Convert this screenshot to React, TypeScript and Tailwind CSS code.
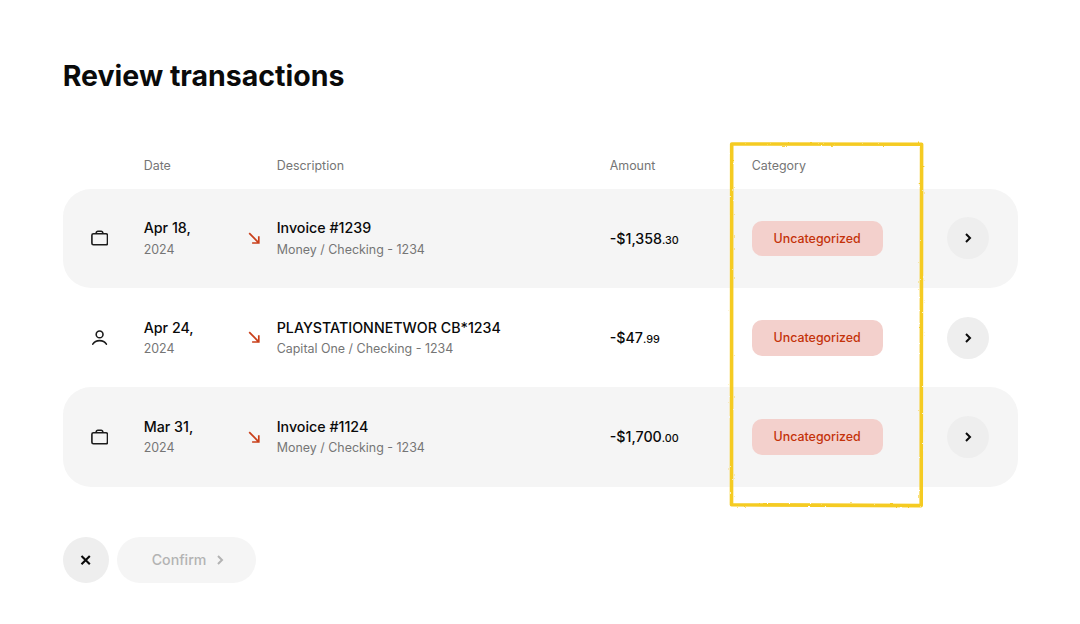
const COLS = "grid grid-cols-[81px_104px_29px_333px_142px_195px_1fr] items-center";

const transactions = [
  {
    kind: "business",
    day: "Apr 18,",
    year: "2024",
    title: "Invoice #1239",
    account: "Money / Checking - 1234",
    amount: "-$1,358",
    cents: ".30",
  },
  {
    kind: "personal",
    day: "Apr 24,",
    year: "2024",
    title: "PLAYSTATIONNETWOR CB*1234",
    account: "Capital One / Checking - 1234",
    amount: "-$47",
    cents: ".99",
  },
  {
    kind: "business",
    day: "Mar 31,",
    year: "2024",
    title: "Invoice #1124",
    account: "Money / Checking - 1234",
    amount: "-$1,700",
    cents: ".00",
  },
];

function BriefcaseIcon() {
  return (
    <svg width="18" height="18" viewBox="0 0 18 18" fill="none" stroke="#1c1c1c" strokeWidth="1.6" strokeLinejoin="round">
      <rect x="1.9" y="4.8" width="15.6" height="11" rx="1.5" />
      <path d="M6.200 4.800V4a1.700 1.700 0 0 1 1.700-1.700h3.200a1.700 1.700 0 0 1 1.700 1.700v.8" />
    </svg>
  );
}

function PersonIcon() {
  return (
    <svg width="18" height="18" viewBox="0 0 18 18" fill="none" stroke="#1c1c1c" strokeWidth="1.6" strokeLinecap="round">
      <circle cx="9.6" cy="5.4" r="3.4" />
      <path d="M2.800 15.200C4.200 12.900 6.700 11.600 9.600 11.600s5.400 1.300 6.800 3.600" />
    </svg>
  );
}

function ArrowDownRight() {
  return (
    <svg width="13" height="13" viewBox="0 0 13 13" fill="none" stroke="#c93f1a" strokeWidth="1.7">
      <path d="M1.200 1.100 10.700 10.800M10.800 4.300v6.700H4.100" />
    </svg>
  );
}

function Chevron() {
  return (
    <svg width="8" height="12" viewBox="0 0 8 12" fill="none" stroke="currentColor" strokeWidth="2">
      <path d="M2 2 6 6 2 10" />
    </svg>
  );
}

// Hand-drawn marker box around the category column
function MarkerBox() {
  return (
    <svg
      className="pointer-events-none absolute left-[664px] -top-[3px]"
      width="200"
      height="372"
      viewBox="0 0 200 372"
      fill="none"
    >
      <filter id="rough" x="-5%" y="-5%" width="110%" height="110%">
        <feTurbulence type="fractalNoise" baseFrequency="0.3" numOctaves="2" seed="4" />
        <feDisplacementMap in="SourceGraphic" scale="2" xChannelSelector="R" yChannelSelector="G" />
      </filter>
      <path
        d="M4.700 5 194.600 5.200 194.200 366.600 4.500 365.800Z"
        stroke="#f5cb23"
        strokeWidth="3.600"
        strokeLinejoin="round"
        filter="url(#rough)"
      />
    </svg>
  );
}

export default function App() {
  return (
    <main className="h-[624px] w-[1080px] bg-white pl-[62.7px] pt-[58px] font-['Inter',sans-serif] text-[#0a0a0a]">
      <h1 className="h-[36px] text-[28.5px] font-bold leading-[36px]">Review transactions</h1>

      <section className="relative mt-[48px] w-[955px]">
        <div className={`${COLS} h-[46.7px] pt-[1.5px] text-[12.45px] text-[#757575]`}>
          <span className="col-start-2">Date</span>
          <span className="col-start-4">Description</span>
          <span>Amount</span>
          <span>Category</span>
        </div>

        {transactions.map((t, i) => (
          <div
            key={t.title}
            className={`${COLS} h-[99.4px] rounded-[28px] ${i % 2 === 0 ? "bg-[#f5f5f5]" : ""}`}
          >
            <div className="pl-[27px]">{t.kind === "business" ? <BriefcaseIcon /> : <PersonIcon />}</div>
            <div className="leading-[21px]">
              <div className="text-[14.25px] font-medium">{t.day}</div>
              <div className="pt-[0.5px] text-[12.45px] text-[#757575]">{t.year}</div>
            </div>
            <ArrowDownRight />
            <div className="leading-[21px]">
              <div className="text-[14.25px] font-medium">{t.title}</div>
              <div className="pt-[0.5px] text-[12.45px] text-[#757575]">{t.account}</div>
            </div>
            <div className="text-[14.25px] font-medium">
              {t.amount}
              <span className="text-[10.8px]">{t.cents}</span>
            </div>
            <div>
              <span className="flex h-[35.5px] w-[131px] items-center justify-center rounded-[10px] bg-[#f3d0cc] pt-[1.2px] text-[12.4px] font-medium text-[#c4320a]">
                Uncategorized
              </span>
            </div>
            <button className="flex size-[42px] items-center justify-center rounded-full bg-[#eeeeee]">
              <Chevron />
            </button>
          </div>
        ))}

        <MarkerBox />
      </section>

      <div className="mt-[49.9px] flex gap-[8px]">
        <button className="flex size-[46px] items-center justify-center rounded-full bg-[#eeeeee]">
          <svg width="12" height="12" viewBox="0 0 12 12" stroke="currentColor" strokeWidth="2.1">
            <path d="M1.500 2 9.800 10.300M9.800 2 1.500 10.300" />
          </svg>
        </button>
        <button className="flex h-[46px] w-[139px] items-center gap-[10px] rounded-full bg-[#f5f5f5] pl-[35px] text-[14.2px] font-medium text-[#b3b3b3]">
          Confirm
          <Chevron />
        </button>
      </div>
    </main>
  );
}
